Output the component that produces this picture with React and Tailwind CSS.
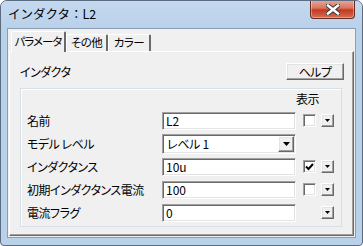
import React from "react";

const sunken =
  "border border-t-[#a0a0a0] border-l-[#a0a0a0] border-r-white border-b-white shadow-[inset_1px_1px_0_#696969,inset_-1px_-1px_0_#e3e3e3]";
const raised =
  "border border-t-white border-l-white border-r-[#696969] border-b-[#696969] shadow-[inset_-1px_-1px_0_#a0a0a0,inset_1px_1px_0_#e3e3e3] bg-[#f0f0f0]";

const Arrow = ({ w = 5 }) => (
  <svg width={w} height={Math.ceil(w / 2)} viewBox={`0 0 ${w} ${Math.ceil(w / 2)}`}>
    <polygon points={`0,0 ${w},0 ${w / 2},${Math.ceil(w / 2)}`} fill="#000" />
  </svg>
);

const SmallDrop = () => (
  <div className={"w-[13px] h-[13px] flex items-center justify-center " + raised}>
    <Arrow w={5} />
  </div>
);

const Check = ({ checked }) => (
  <div className={"w-[13px] h-[13px] bg-white flex items-center justify-center " + sunken}>
    {checked && (
      <svg width="9" height="8" viewBox="0 0 9 8">
        <polyline points="1,3.5 3.5,6 8,1" fill="none" stroke="#000" strokeWidth="2" />
      </svg>
    )}
  </div>
);

const rows = [
  { label: "名前", value: "L2", check: false, drop: true },
  { label: "モデル レベル", value: "レベル 1", select: true },
  { label: "インダクタンス", value: "10u", check: true, drop: true },
  { label: "初期インダクタンス電流", value: "100", check: false, drop: true },
  { label: "電流フラグ", value: "0", drop: true, noCheck: true },
];

export default function App() {
  return (
    <div className="w-[363px] h-[246px] bg-[#bad1ea] border border-[#5b6c80] rounded-t-[7px] rounded-b-[4px] flex flex-col text-black text-[12px] leading-none font-['Noto_Sans_CJK_JP','Noto_Sans',sans-serif] overflow-hidden">
      <div className="h-[27px] flex justify-between items-start pl-[7px] pr-[7px] shrink-0 bg-[linear-gradient(#c4d9ef,#bad1ea)]">
        <span className="self-center text-[12.5px]">インダクタ：L2</span>
        <div className="-mt-px w-[45px] h-[19px] rounded-b-[4px] border border-t-0 border-[#6b2a1e] bg-[linear-gradient(#e8ab9d,#d9735e_45%,#c2391f_55%,#d46f57)] flex items-center justify-center shadow-[inset_0_0_0_1px_rgba(255,255,255,0.35)]">
          <svg width="14" height="11" viewBox="0 0 14 11">
            <path d="M2 1.5 L12 9.5 M12 1.5 L2 9.5" stroke="#3a3a3a" strokeWidth="4.5" strokeLinecap="square" />
            <path d="M2 1.5 L12 9.5 M12 1.5 L2 9.5" stroke="#fff" strokeWidth="2.5" strokeLinecap="square" />
          </svg>
        </div>
      </div>

      <div className="flex-1 mx-[6px] mb-[7px] border border-[#8a9db2] bg-[#f0f0f0] flex flex-col pl-[1px] pr-[1px] pb-[1px] [font-feature-settings:'palt'] tracking-[-0.5px]">
        <div className="h-[22px] flex items-end pl-[2px] shrink-0 text-[11.5px]">
          <div className="relative z-10 -mb-px h-[21px] w-[55px] bg-[#f0f0f0] border-t border-l border-white border-r-2 border-r-[#696969] rounded-t-[2px] flex items-center justify-center pb-[1px] tracking-[-1px]">
            パラメータ
          </div>
          <div className="h-[17px] w-[42px] bg-[#f0f0f0] border-t border-l border-white border-r-2 border-r-[#696969] rounded-t-[2px] flex items-center justify-center">
            その他
          </div>
          <div className="h-[17px] w-[43px] bg-[#f0f0f0] border-t border-l border-white border-r-2 border-r-[#696969] rounded-t-[2px] flex items-center justify-center">
            カラー
          </div>
        </div>

        <div className="flex-1 border border-t-white border-l-white border-r-[#696969] border-b-[#696969] shadow-[inset_-1px_-1px_0_#a0a0a0] pt-[11px] pl-[10px] pr-[9px] flex flex-col">
          <div className="h-[17px] flex items-center justify-between">
            <span>インダクタ</span>
            <div className={"w-[58px] h-[17px] flex items-center justify-center " + raised}>
              ヘルプ
            </div>
          </div>

          <div className="mt-[8px] mr-[2px] h-[139px] border border-[#d5dfe5] shadow-[inset_1px_1px_0_#fff] flex flex-col pl-[6px]">
            <div className="h-[14px] mt-[3px] mb-[3px] pl-[269px] flex items-center">表示</div>
            {rows.map((r) => (
              <div key={r.label} className="h-[23px] flex items-center">
                <div className="w-[135px]">{r.label}</div>
                {r.select ? (
                  <div className={"w-[134px] h-[20px] bg-white flex items-center pl-[4px] pr-[1px] " + sunken}>
                    <span className="flex-1 tracking-[-0.3px]">{r.value}</span>
                    <div className={"w-[16px] h-[16px] flex items-center justify-center " + raised}>
                      <Arrow w={7} />
                    </div>
                  </div>
                ) : (
                  <div className={"w-[134px] h-[18px] bg-white flex items-center pl-[3px] tracking-normal " + sunken}>
                    {r.value}
                  </div>
                )}
                {!r.select && (
                  <div className="ml-[7px] w-[13px]">{!r.noCheck && <Check checked={r.check} />}</div>
                )}
                {r.drop && (
                  <div className="ml-[5px]">
                    <SmallDrop />
                  </div>
                )}
              </div>
            ))}
          </div>
        </div>
      </div>
    </div>
  );
}
